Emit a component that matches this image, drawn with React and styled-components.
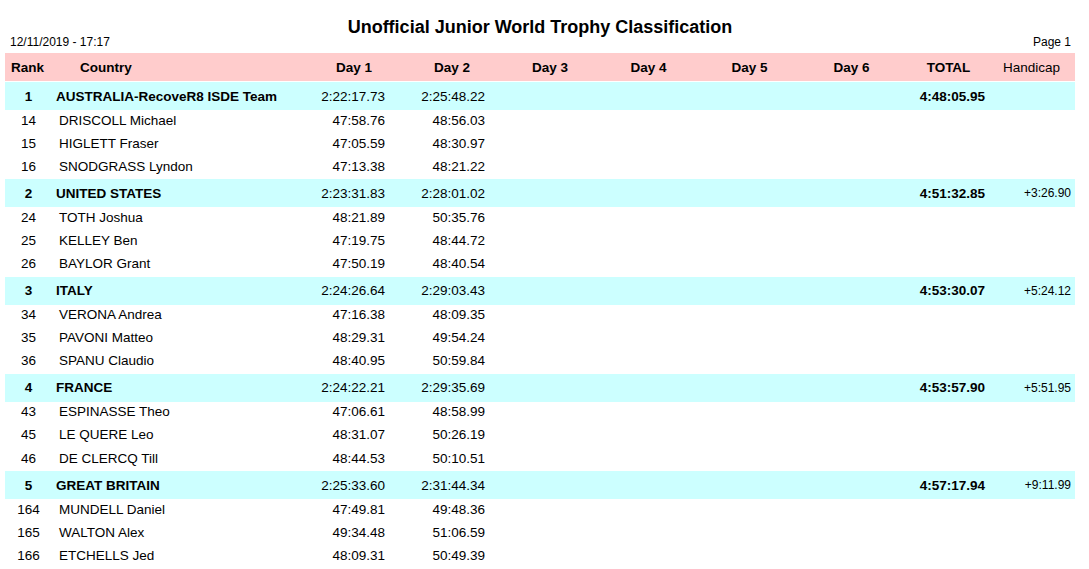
import React from "react";
import styled, { createGlobalStyle } from "styled-components";

const GlobalStyle = createGlobalStyle`
  html, body { margin: 0; padding: 0; background: #ffffff; }
  body { font-family: "Liberation Sans", Arial, sans-serif; color: #000; }
`;

const Page = styled.div`
  padding: 0 5px;
  width: 1070px;
`;

const Title = styled.h1`
  margin: 17px 0 0;
  font-size: 18px;
  line-height: 20px;
  font-weight: bold;
  text-align: center;
`;

const Meta = styled.div`
  display: flex;
  justify-content: space-between;
  padding: 0 4px 0 5px;
  font-size: 12px;
  line-height: 12px;
  margin-top: -1px;
`;

const Table = styled.div`
  margin-top: 5px;
  display: flex;
  flex-direction: column;
`;

const COLS = "47px 253px 98px 98px 98px 99px 103px 101px 93px 80px";

const Row = styled.div`
  display: grid;
  grid-template-columns: ${COLS};
  align-items: center;
  box-sizing: border-box;
  height: ${(p) => (p.$kind === "rider" ? "23.1px" : "28px")};
  padding-bottom: ${(p) => (p.$kind === "rider" ? "3px" : "0")};
  margin-bottom: ${(p) => (p.$kind === "head" ? "1px" : "0")};
  background: ${(p) =>
    p.$kind === "head" ? "#ffcccc" : p.$kind === "team" ? "#ccffff" : "transparent"};
  font-size: 13.5px;
`;

const Cell = styled.div`
  text-align: ${(p) => p.$align || "left"};
  font-weight: ${(p) => (p.$bold ? "bold" : "normal")};
  font-size: ${(p) => (p.$small ? "12px" : "13.5px")};
  padding-left: ${(p) => p.$pl || 0}px;
  padding-right: ${(p) => p.$pr || 0}px;
  white-space: nowrap;
`;

const teams = [
  {
    rank: "1",
    name: "AUSTRALIA-RecoveR8 ISDE Team",
    d1: "2:22:17.73",
    d2: "2:25:48.22",
    total: "4:48:05.95",
    hc: "",
    riders: [
      ["14", "DRISCOLL Michael", "47:58.76", "48:56.03"],
      ["15", "HIGLETT Fraser", "47:05.59", "48:30.97"],
      ["16", "SNODGRASS Lyndon", "47:13.38", "48:21.22"],
    ],
  },
  {
    rank: "2",
    name: "UNITED STATES",
    d1: "2:23:31.83",
    d2: "2:28:01.02",
    total: "4:51:32.85",
    hc: "+3:26.90",
    riders: [
      ["24", "TOTH Joshua", "48:21.89", "50:35.76"],
      ["25", "KELLEY Ben", "47:19.75", "48:44.72"],
      ["26", "BAYLOR Grant", "47:50.19", "48:40.54"],
    ],
  },
  {
    rank: "3",
    name: "ITALY",
    d1: "2:24:26.64",
    d2: "2:29:03.43",
    total: "4:53:30.07",
    hc: "+5:24.12",
    riders: [
      ["34", "VERONA Andrea", "47:16.38", "48:09.35"],
      ["35", "PAVONI Matteo", "48:29.31", "49:54.24"],
      ["36", "SPANU Claudio", "48:40.95", "50:59.84"],
    ],
  },
  {
    rank: "4",
    name: "FRANCE",
    d1: "2:24:22.21",
    d2: "2:29:35.69",
    total: "4:53:57.90",
    hc: "+5:51.95",
    riders: [
      ["43", "ESPINASSE Theo", "47:06.61", "48:58.99"],
      ["45", "LE QUERE Leo", "48:31.07", "50:26.19"],
      ["46", "DE CLERCQ Till", "48:44.53", "50:10.51"],
    ],
  },
  {
    rank: "5",
    name: "GREAT BRITAIN",
    d1: "2:25:33.60",
    d2: "2:31:44.34",
    total: "4:57:17.94",
    hc: "+9:11.99",
    riders: [
      ["164", "MUNDELL Daniel", "47:49.81", "49:48.36"],
      ["165", "WALTON Alex", "49:34.48", "51:06.59"],
      ["166", "ETCHELLS Jed", "48:09.31", "50:49.39"],
    ],
  },
];

const Empty = () => (
  <>
    <Cell />
    <Cell />
    <Cell />
    <Cell />
  </>
);

export default function App() {
  return (
    <>
      <GlobalStyle />
      <Page>
        <Title>Unofficial Junior World Trophy Classification</Title>
        <Meta>
          <span>12/11/2019 - 17:17</span>
          <span>Page 1</span>
        </Meta>
        <Table>
          <Row $kind="head">
            <Cell $bold $pl={6}>Rank</Cell>
            <Cell $bold $pl={28}>Country</Cell>
            <Cell $bold $align="center">Day 1</Cell>
            <Cell $bold $align="center">Day 2</Cell>
            <Cell $bold $align="center">Day 3</Cell>
            <Cell $bold $align="center">Day 4</Cell>
            <Cell $bold $align="center">Day 5</Cell>
            <Cell $bold $align="center">Day 6</Cell>
            <Cell $bold $align="center">TOTAL</Cell>
            <Cell $align="center" $pr={7}>Handicap</Cell>
          </Row>
          {teams.map((t) => (
            <React.Fragment key={t.rank}>
              <Row $kind="team">
                <Cell $bold $align="center">{t.rank}</Cell>
                <Cell $bold $pl={4}>{t.name}</Cell>
                <Cell $align="right" $pr={18}>{t.d1}</Cell>
                <Cell $align="right" $pr={16}>{t.d2}</Cell>
                <Empty />
                <Cell $bold $align="right" $pr={10}>{t.total}</Cell>
                <Cell $small $align="right" $pr={4}>{t.hc}</Cell>
              </Row>
              {t.riders.map((r) => (
                <Row $kind="rider" key={r[0]}>
                  <Cell $align="center">{r[0]}</Cell>
                  <Cell $pl={7}>{r[1]}</Cell>
                  <Cell $align="right" $pr={18}>{r[2]}</Cell>
                  <Cell $align="right" $pr={16}>{r[3]}</Cell>
                  <Empty />
                  <Cell />
                  <Cell />
                </Row>
              ))}
            </React.Fragment>
          ))}
        </Table>
      </Page>
    </>
  );
}
